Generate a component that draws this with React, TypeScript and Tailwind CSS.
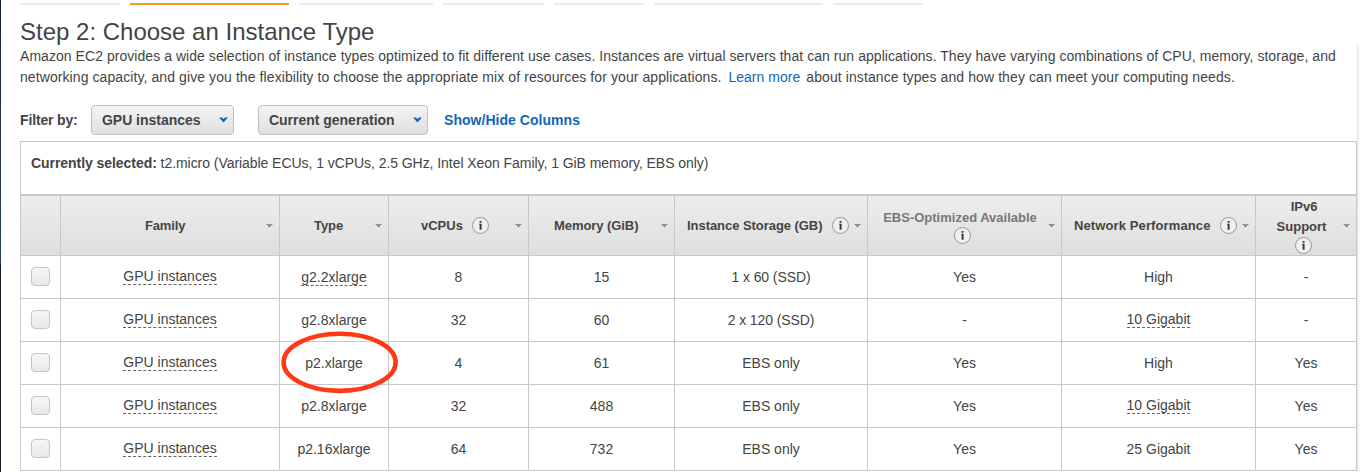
import React from "react";

const steps = [
  "w-[100px] bg-[#ebebeb]",
  "w-[159px] bg-[#f9982a]",
  "w-[134px] bg-[#ebebeb]",
  "w-[101px] bg-[#ebebeb]",
  "w-[90px] bg-[#ebebeb]",
  "w-[169px] bg-[#ebebeb]",
  "w-[90px] bg-[#ebebeb]",
];

const columns =
  "grid grid-cols-[40px_219px_109px_140px_146px_193px_194px_194px_101px]";

type Cell = { text: string; tip?: boolean };

const t = (text: string): Cell => ({ text, tip: true });
const p = (text: string): Cell => ({ text });

const rows: Cell[][] = [
  [t("GPU instances"), t("g2.2xlarge"), p("8"), p("15"), p("1 x 60 (SSD)"), p("Yes"), p("High"), p("-")],
  [t("GPU instances"), p("g2.8xlarge"), p("32"), p("60"), p("2 x 120 (SSD)"), p("-"), t("10 Gigabit"), p("-")],
  [t("GPU instances"), p("p2.xlarge"), p("4"), p("61"), p("EBS only"), p("Yes"), p("High"), p("Yes")],
  [t("GPU instances"), p("p2.8xlarge"), p("32"), p("488"), p("EBS only"), p("Yes"), t("10 Gigabit"), p("Yes")],
  [t("GPU instances"), p("p2.16xlarge"), p("64"), p("732"), p("EBS only"), p("Yes"), p("25 Gigabit"), p("Yes")],
];

function Info() {
  return (
    <svg className="-mt-px h-[17px] w-[17px] shrink-0" viewBox="0 0 17 17">
      <circle cx="8.5" cy="8.5" r="8" fill="#f0f0f0" stroke="#8c8c8c" strokeWidth="0.9" />
      <path d="M7.6 3.9h2v1.8h-2zM7 6.7h2.6v6h-2V7.5H7z" fill="#3c3c3c" />
    </svg>
  );
}

function Head({ className, children }: { className?: string; children?: React.ReactNode }) {
  return (
    <div className="flex h-[59px] items-center border-r border-[#c8c8c8] text-[13px] leading-5 font-bold whitespace-nowrap">
      <div className={`flex min-w-0 flex-1 ${className ?? ""}`}>{children}</div>
      <svg className="mt-[2px] mr-[6px] h-[5px] w-[7px] shrink-0" viewBox="0 0 7 5">
        <path d="M0 1h7L3.5 5z" fill="#fff" />
        <path d="M0 0h7L3.5 4z" fill="#909090" />
      </svg>
    </div>
  );
}

function Select({ label, className }: { label: string; className: string }) {
  return (
    <button
      className={`flex h-[30px] items-center justify-between rounded-[4px] border border-[#bfbfbf] bg-linear-to-b from-[#f5f5f5] to-[#dfdfdf] pr-[5px] pl-[10px] font-bold ${className}`}
    >
      <span>{label}</span>
      <svg className="mb-px h-[6px] w-[9px]" viewBox="0 0 9 6">
        <path d="M0 .5h3L4.5 2 6 .5h3L4.5 5.5z" fill="#1166bb" />
      </svg>
    </button>
  );
}

export default function App() {
  return (
    <div className="flex h-[472px] w-[1360px] overflow-hidden bg-white font-['Liberation_Sans',Arial,sans-serif] text-[14px] text-[#444]">
      <div className="flex w-px shrink-0 flex-col">
        <div className="h-[264px] bg-linear-to-b from-[#17233c] to-[#2c3f60]" />
        <div className="flex-1 bg-[#14192b]" />
      </div>
      <main className="flex w-[1356px] shrink-0 flex-col pl-[19px]">
        <div className="flex gap-[10px] pt-[3px]">
          {steps.map((s, i) => (
            <div key={i} className={`h-[2px] ${s}`} />
          ))}
        </div>
        <h1 className="mt-[11px] h-[30px] text-[24px] leading-[32px]">Step 2: Choose an Instance Type</h1>
        <div className="h-[42px] leading-[21px] whitespace-nowrap">
          <p className="tracking-[0.048px]">
            Amazon EC2 provides a wide selection of instance types optimized to fit different use cases. Instances are virtual servers that can run applications. They have varying combinations of CPU, memory, storage, and
          </p>
          <p className="tracking-[0.086px]">
            networking capacity, and give you the flexibility to choose the appropriate mix of resources for your applications.
            <a className="mr-[6px] ml-[7px] tracking-[0.02px] text-[#1166bb]">Learn more</a>
            <span className="tracking-[0.095px]">about instance types and how they can meet your computing needs.</span>
          </p>
        </div>
        <div className="mt-[17px] flex h-[30px] items-center whitespace-nowrap">
          <span className="w-[71px] font-bold tracking-[-0.15px]">Filter by:</span>
          <Select label="GPU instances" className="w-[143px] tracking-[-0.03px]" />
          <Select label="Current generation" className="ml-6 w-[170px] tracking-[-0.02px]" />
          <a className="ml-4 font-bold tracking-[0.04px] text-[#1166bb]">Show/Hide Columns</a>
        </div>
        <section className="relative mt-[6px] w-[1337px] border-t border-l border-[#c8c8c8]">
          <div className="h-[52px] border-r border-[#c8c8c8] pt-[11px] pl-[10px] leading-5 tracking-[-0.055px]">
            <b>Currently selected:</b> t2.micro (Variable ECUs, 1 vCPUs, 2.5 GHz, Intel Xeon Family, 1 GiB memory, EBS only)
          </div>
          <div className={`${columns} h-[62px] border-t-2 border-b border-[#c8c8c8] bg-linear-to-b from-[#ededed] to-[#dedede]`}>
            <div className="border-r border-[#c8c8c8]" />
            <Head className="pl-[84px] tracking-[-0.15px]">Family</Head>
            <Head className="pl-[34px] tracking-[-0.05px]">Type</Head>
            <Head className="items-center gap-[9px] pl-[32px]">
              vCPUs <Info />
            </Head>
            <Head className="pl-[25px] tracking-[-0.07px]">Memory (GiB)</Head>
            <Head className="items-center gap-[10px] pl-[12px] tracking-[-0.05px]">
              Instance Storage (GB) <Info />
            </Head>
            <Head className="flex-col items-center pr-[5px] pl-[9px] text-[#777]">
              <span className="h-5">EBS-Optimized Available</span>
              <span className="flex pl-[4px]"><Info /></span>
            </Head>
            <Head className="items-center gap-[10px] pl-[12px] tracking-[0.11px]">
              Network Performance <Info />
            </Head>
            <Head className="flex-col items-center pl-[4px]">
              <span className="h-5 pl-[5px]">IPv6</span>
              <span className="h-[21px]">Support</span>
              <span className="flex pl-[4px]"><Info /></span>
            </Head>
          </div>
          {rows.map((row, r) => (
            <div key={r} className={`${columns} h-[43px] border-b border-[#c8c8c8]`}>
              <div className="flex items-start border-r border-[#c8c8c8] pt-[11px] pl-[10px]">
                <span className="h-[19px] w-[19px] rounded-[4px] border border-[#c4c4c4] bg-linear-to-b from-[#f6f6f6] to-[#e9e9e9]" />
              </div>
              {row.map((c, i) => (
                <div key={i} className="flex items-start justify-center border-r border-[#c8c8c8] pt-[12px] leading-4">
                  <span className={c.tip ? (i === 1 ? "mt-px h-[17px] border-b border-dashed border-[#666]" : "h-[17px] border-b border-dashed border-[#666]") : i === 4 && r < 2 ? "mt-px tracking-[-0.1px]" : "mt-px"}>
                    {c.text}
                  </span>
                </div>
              ))}
            </div>
          ))}
          <svg className="pointer-events-none absolute top-[188px] left-[258px] h-[66px] w-[122px]" viewBox="0 0 122 66">
            <ellipse cx="60.6" cy="32.3" rx="56" ry="28.6" fill="none" stroke="#ff3816" strokeWidth="4.6" />
          </svg>
        </section>
      </main>
      <div className="mt-[45px] flex-1 border-l border-[#e4e4e4] bg-[#f8f8f8]" />
    </div>
  );
}
